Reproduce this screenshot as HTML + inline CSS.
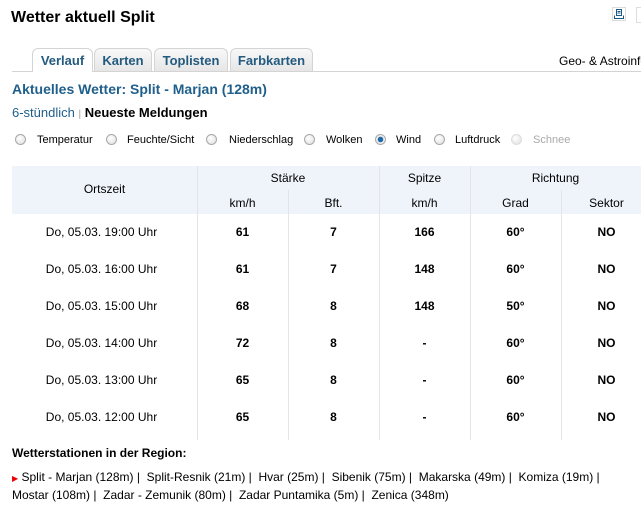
<!DOCTYPE html>
<html><head><meta charset="utf-8"><style>
body{margin:0;width:641px;height:511px;overflow:hidden;background:#fff;font-family:"Liberation Sans",Arial,sans-serif;position:relative;color:#000}
.a{position:absolute;white-space:nowrap}
.tab{position:absolute;top:48px;height:23px;border:1px solid #d4d4d4;border-bottom:none;border-radius:6px 6px 0 0;background:linear-gradient(#f8f8f8,#e6e6e6);color:#235a7f;font-weight:bold;font-size:13px;text-align:center;line-height:23px;box-sizing:border-box}
.r{position:absolute;top:134px;width:11px;height:11px;border-radius:50%;border:1px solid #a8a8a8;background:radial-gradient(circle at 40% 35%,#fff,#ddd);box-sizing:border-box}
.l{position:absolute;top:134px;font-size:11px}
.vl{position:absolute;width:1px;background:#e4e4e4}
.c{position:absolute;font-size:12px;text-align:center}
</style></head><body>
<div class="a" style="left:11px;top:9px;font-size:16px;font-weight:bold">Wetter aktuell Split</div>
<div class="a" style="left:612px;top:7px;width:14px;height:14px;border:1px solid #ddd;box-sizing:border-box">
<svg width="12" height="12" viewBox="0 0 12 12" style="position:absolute;left:0;top:0"><rect x="3.5" y="1.5" width="5" height="6" fill="none" stroke="#1c5a86"/><path d="M4.5 3.5h3M4.5 5h3M1.5 7.5v3h9v-3" fill="none" stroke="#1c5a86"/></svg></div>
<div class="a" style="left:636px;top:7px;width:10px;height:14px;border:1px solid #ddd"></div>
<div class="a" style="left:12px;top:71px;width:629px;height:1px;background:#d4d4d4"></div>
<div class="tab" style="left:32px;width:61px;background:#fff;height:24px">Verlauf</div>
<div class="tab" style="left:94px;width:58px">Karten</div>
<div class="tab" style="left:154px;width:74px">Toplisten</div>
<div class="tab" style="left:230px;width:83px">Farbkarten</div>
<div class="a" style="left:559px;top:54px;font-size:12px">Geo- &amp; Astroinfo</div>
<div class="a" style="left:12px;top:81px;font-size:14px;font-weight:bold;color:#1f5f8b">Aktuelles Wetter: Split - Marjan (128m)</div>
<div class="a" style="left:12px;top:105px;font-size:13px;color:#1f5f8b">6-stündlich <span style="color:#999;font-size:10px">|</span> <b style="color:#000">Neueste Meldungen</b></div>
<div class="r" style="left:15px"></div><div class="l" style="left:37px">Temperatur</div>
<div class="r" style="left:106px"></div><div class="l" style="left:127px">Feuchte/Sicht</div>
<div class="r" style="left:206px"></div><div class="l" style="left:229px">Niederschlag</div>
<div class="r" style="left:304px"></div><div class="l" style="left:326px">Wolken</div>
<div class="r" style="left:375px;background:radial-gradient(circle,#1c6aa8 0 2.5px,#eee 3px)"></div><div class="l" style="left:396px">Wind</div>
<div class="r" style="left:434px"></div><div class="l" style="left:455px">Luftdruck</div>
<div class="r" style="left:511px;border-color:#ddd"></div><div class="l" style="left:533px;color:#aaa">Schnee</div>
<div class="a" style="left:12px;top:166px;width:629px;height:48px;background:#eff4fa"></div>
<div class="vl" style="left:197px;top:166px;height:274px"></div>
<div class="vl" style="left:288px;top:190px;height:250px"></div>
<div class="vl" style="left:379px;top:166px;height:274px"></div>
<div class="vl" style="left:470px;top:166px;height:274px"></div>
<div class="vl" style="left:561px;top:190px;height:250px"></div>
<div class="c" style="left:12px;width:185px;top:182px">Ortszeit</div>
<div class="c" style="left:197px;width:182px;top:171px">Stärke</div>
<div class="c" style="left:379px;width:91px;top:171px">Spitze</div>
<div class="c" style="left:470px;width:171px;top:171px">Richtung</div>
<div class="c" style="left:197px;width:91px;top:196px">km/h</div>
<div class="c" style="left:288px;width:91px;top:196px">Bft.</div>
<div class="c" style="left:379px;width:91px;top:196px">km/h</div>
<div class="c" style="left:470px;width:91px;top:196px">Grad</div>
<div class="c" style="left:561px;width:91px;top:196px">Sektor</div>
<div id="rows"></div>
<script>
var d=[["19:00","61","7","166","60°"],["16:00","61","7","148","60°"],["15:00","68","8","148","50°"],["14:00","72","8","-","60°"],["13:00","65","8","-","60°"],["12:00","65","8","-","60°"]];
var h="";d.forEach(function(r,i){var t=225+i*37;
h+='<div class="c" style="left:9px;width:185px;top:'+t+'px">Do, 05.03. '+r[0]+' Uhr</div>';
var L=[197,288,379,470,561],v=[r[1],r[2],r[3],r[4],"NO"];
for(var j=0;j<5;j++)h+='<div class="c" style="font-weight:bold;left:'+L[j]+'px;width:91px;top:'+t+'px">'+v[j]+'</div>';});
document.getElementById("rows").innerHTML=h;
</script>
<div class="a" style="left:12px;top:446px;font-size:12px;font-weight:bold">Wetterstationen in der Region:</div>
<div class="a" style="left:12px;top:469px;font-size:12px;line-height:16px"><span style="color:#e00;font-size:8px">&#9654;</span> Split - Marjan (128m) | &nbsp;Split-Resnik (21m) | &nbsp;Hvar (25m) | &nbsp;Sibenik (75m) | &nbsp;Makarska (49m) | &nbsp;Komiza (19m) |<br>Mostar (108m) | &nbsp;Zadar - Zemunik (80m) | &nbsp;Zadar Puntamika (5m) | &nbsp;Zenica (348m)</div>
</body></html>
